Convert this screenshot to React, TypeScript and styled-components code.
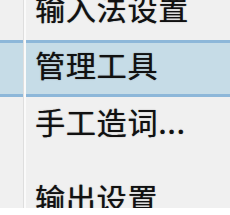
import styled, { createGlobalStyle } from "styled-components";

const GlobalStyle = createGlobalStyle`
    html, body {
        margin: 0;
        padding: 0;
        background: #ffffff;
    }
`

type ItemType = {
    label: string
    active?: boolean
    gapBefore?: boolean
}

const items: ItemType[] = [
    { label: "输入法设置" },
    { label: "管理工具", active: true },
    { label: "手工造词..." },
    { label: "输出设置", gapBefore: true },
]

export default function App() {
    return (
        <>
            <GlobalStyle />
            <Frame>
                <Menu>
                    {items.map((item) => (
                        <Item key={item.label} $active={item.active} $gap={item.gapBefore}>
                            <Label>{item.label}</Label>
                        </Item>
                    ))}
                </Menu>
            </Frame>
        </>
    );
}

const Frame = styled.div`
    width: 230px;
    height: 208px;
    overflow: hidden;
    background: #f0f0f0;
    position: relative;

    &::after {
        content: "";
        position: absolute;
        top: 0;
        bottom: 0;
        left: 23px;
        width: 1px;
        background: #dedede;
        border-right: 2px solid rgba(255, 255, 255, 0.85);
    }
`

const Menu = styled.div`
    display: flex;
    flex-direction: column;
    margin-top: -17px;
`

const Item = styled.div<{ $active?: boolean; $gap?: boolean }>`
    box-sizing: border-box;
    height: 57px;
    display: flex;
    align-items: center;
    padding-left: 35px;
    padding-bottom: 9px;
    margin-top: ${(p) => (p.$gap ? "19px" : "0")};
    background: ${(p) => (p.$active ? "#c6dce7" : "transparent")};
    border-top: 3px solid ${(p) => (p.$active ? "#8db7d9" : "transparent")};
    border-bottom: 3px solid ${(p) => (p.$active ? "#8db7d9" : "transparent")};
`

const Label = styled.span`
    font-family: "Noto Sans CJK SC", "Noto Sans", sans-serif;
    font-size: 30px;
    line-height: 1;
    letter-spacing: 0.8px;
    color: #111111;
    text-shadow: 0.4px 0 0 rgba(0, 0, 0, 0.6), 0 0 1.5px rgba(0, 0, 0, 0.35);
`
